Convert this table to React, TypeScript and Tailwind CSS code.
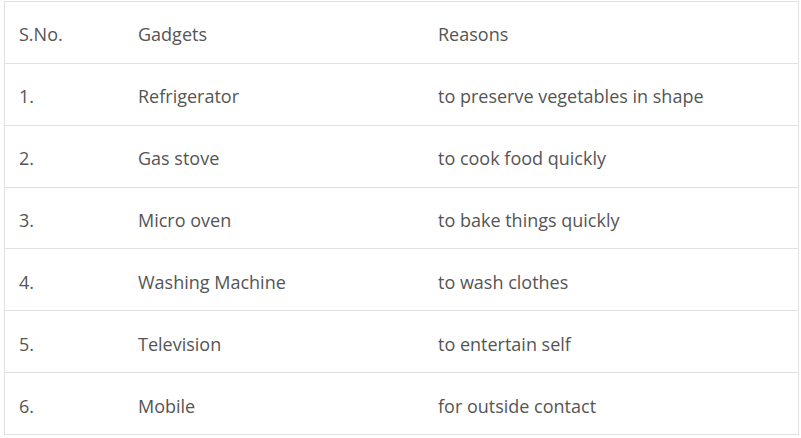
const rows = [
  ['1.', 'Refrigerator', 'to preserve vegetables in shape'],
  ['2.', 'Gas stove', 'to cook food quickly'],
  ['3.', 'Micro oven', 'to bake things quickly'],
  ['4.', 'Washing Machine', 'to wash clothes'],
  ['5.', 'Television', 'to entertain self'],
  ['6.', 'Mobile', 'for outside contact'],
]

function Row({ cells }: { cells: string[] }) {
  return (
    <div className="flex h-[61.86px] items-center border-b border-[#e1e1e1] pt-[5px]">
      <div className="w-[119px] pl-[14px]">{cells[0]}</div>
      <div className="w-[300px] pl-[14px]">{cells[1]}</div>
      <div className="flex-1 pl-[14px]">{cells[2]}</div>
    </div>
  )
}

export default function App() {
  return (
    <div className="min-h-screen bg-white pl-[4px] pt-[1px]">
      <div
        className="w-[795px] border border-b-0 border-[#e1e1e1] text-[18px] text-[#555]"
        style={{ fontFamily: '"Open Sans", sans-serif' }}
      >
        <Row cells={['S.No.', 'Gadgets', 'Reasons']} />
        {rows.map((r) => (
          <Row key={r[0]} cells={r} />
        ))}
      </div>
    </div>
  )
}
